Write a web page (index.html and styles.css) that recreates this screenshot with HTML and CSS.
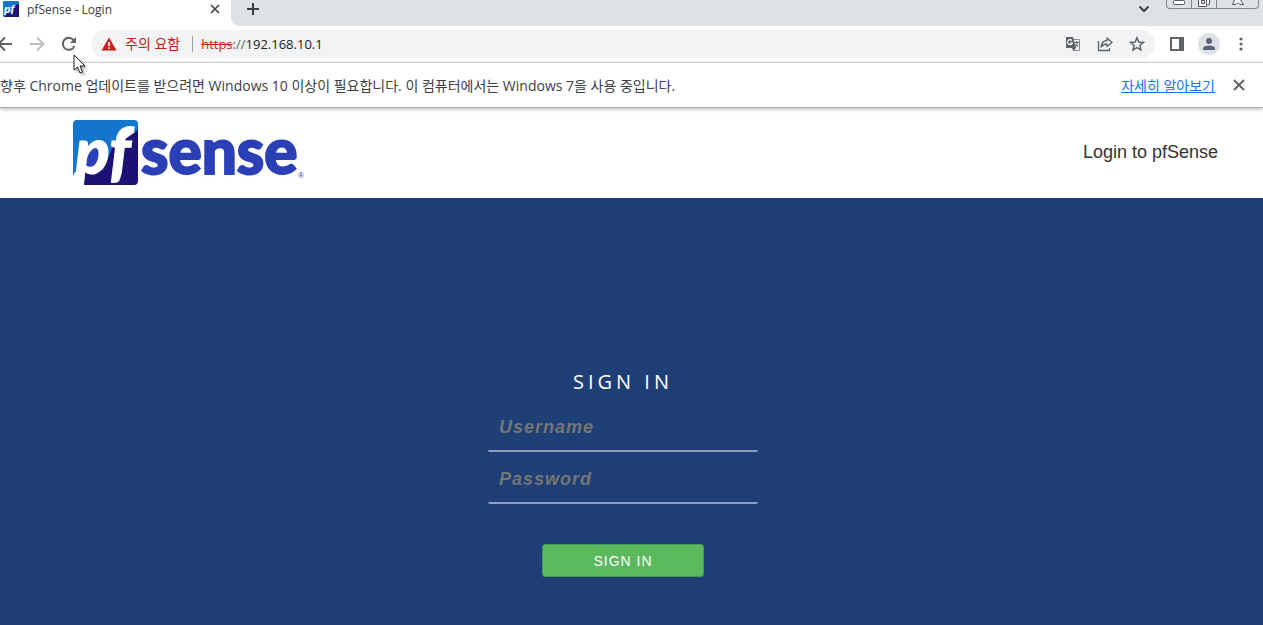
FILE: index.html
```html
<!DOCTYPE html>
<html lang="ko">
<head>
  <meta charset="UTF-8" />
  <meta name="viewport" content="width=device-width, initial-scale=1.0" />
  <title>pfSense - Login</title>
  <link rel="stylesheet" href="styles.css">
</head>
<body>
  <!-- 탭 영역 -->
  <div class="tab-strip">
    <div class="tab">
      <svg class="favicon" width="16" height="16" viewBox="0 0 16 16" aria-hidden="true">
        <rect width="16" height="16" rx="1" fill="#1475cf" />
        <path d="M9 5L16 3V16H2L4 12H8Z" fill="#1c1275" />
        <text x="1" y="12" class="favicon-text">pf</text>
      </svg>
      <span class="tab-title">pfSense - Login</span>
      <button class="icon-button tab-close" aria-label="탭 닫기">
        <svg width="10" height="10" viewBox="0 0 10 10"><path d="M1 1L9 9M9 1L1 9" stroke="#3c4043" stroke-width="1.600" /></svg>
      </button>
    </div>
    <button class="icon-button new-tab" aria-label="새 탭">
      <svg width="12" height="12" viewBox="0 0 12 12"><path d="M6 0V12M0 6H12" stroke="#3c4043" stroke-width="2" /></svg>
    </button>
    <button class="icon-button tab-search" aria-label="탭 검색">
      <svg width="12" height="8" viewBox="0 0 12 8"><path d="M1.500 1.500L6 6L10.500 1.500" fill="none" stroke="#3c4043" stroke-width="2" /></svg>
    </button>
    <div class="window-controls">
      <button aria-label="최소화">
        <svg width="14" height="7" viewBox="0 0 14 7"><rect x="1.500" y="0.500" width="11" height="4" rx="1" fill="#fff" stroke="#55585e" /></svg>
      </button>
      <button aria-label="이전 크기로">
        <svg width="14" height="8" viewBox="0 0 14 8"><path d="M4.500 0V-1H12.500V4.500H10.500" fill="#fff" stroke="#55585e" /><path d="M1.500 -1V6.500H9.500V-1M4.500 0.500H7.500V3.500H4.500Z" fill="#fff" stroke="#55585e" /></svg>
      </button>
      <button class="window-close" aria-label="닫기">
        <svg width="14" height="7" viewBox="0 0 14 7"><path d="M3.500 0L1.500 4.500H5L7 2.500L9 4.500H12.500L9.500 0" fill="#fff" stroke="#55585e" /></svg>
      </button>
    </div>
  </div>

  <!-- 주소창 -->
  <div class="toolbar">
    <button class="icon-button" aria-label="뒤로">
      <svg width="16" height="16" viewBox="0 0 16 16"><path d="M15 8H2M8 1.500L1.500 8L8 14.500" fill="none" stroke="#5f6368" stroke-width="2" /></svg>
    </button>
    <button class="icon-button" aria-label="앞으로">
      <svg width="16" height="16" viewBox="0 0 16 16"><path d="M1 8H14M8 1.500L14.500 8L8 14.500" fill="none" stroke="#babcbe" stroke-width="2" /></svg>
    </button>
    <button class="icon-button" aria-label="새로고침">
      <svg width="16" height="16" viewBox="0 0 16 16"><path d="M13.500 10A6 6 0 1 1 12.500 4" fill="none" stroke="#5f6368" stroke-width="2" /><path d="M15 1V7H9Z" fill="#5f6368" /></svg>
    </button>
    <div class="address-bar">
      <svg width="16" height="14" viewBox="0 0 16 14" aria-hidden="true"><path d="M8 0.500L15.500 13.500H0.500Z" fill="#c5221f" /><path d="M7.200 5H8.800V9H7.200ZM7.200 10.300H8.800V12H7.200Z" fill="#fff" /></svg>
      <span class="warning">주의 요함</span>
      <span class="url"><s>https</s><span class="url-scheme">://</span>192.168.10.1</span>
      <div class="address-actions">
        <button class="icon-button" aria-label="번역">
          <svg width="16" height="16" viewBox="0 0 16 16"><path d="M7 3.500H14.500V14.500H8.500L7 12" fill="#f1f3f4" stroke="#8a8d91" /><path d="M1 1H8L11 12H1Z" fill="#5f6368" /><path d="M7 4.600A2.500 2.500 0 1 0 7.400 7H5" fill="none" stroke="#fff" stroke-width="1.200" /><path d="M9 6.500H14M11.500 5V6.500M13 6.500Q12 9 10 10.500M10.500 8L13 11" fill="none" stroke="#5f6368" /><path d="M7.500 12H11L8.500 15Z" fill="#5f6368" /></svg>
        </button>
        <button class="icon-button" aria-label="공유">
          <svg width="16" height="16" viewBox="0 0 16 16"><path d="M1.500 5V14.500H12.500V12" fill="none" stroke="#5f6368" stroke-width="1.300" /><path d="M10 2L15 6.500L10 10.500V8Q6.500 8 4 11Q4.500 5 10 4.500Z" fill="none" stroke="#5f6368" stroke-width="1.300" stroke-linejoin="round" /></svg>
        </button>
        <button class="icon-button" aria-label="북마크">
          <svg width="16" height="16" viewBox="0 0 16 16"><path d="M8 1.800L9.800 6L14.400 6.400L10.900 9.400L12 13.900L8 11.500L4 13.900L5.100 9.400L1.600 6.400L6.200 6Z" fill="none" stroke="#5f6368" stroke-width="1.500" /></svg>
        </button>
      </div>
    </div>
    <button class="icon-button side-panel" aria-label="측면 패널">
      <svg width="14" height="14" viewBox="0 0 14 14"><path d="M0 0H14V14H0ZM2 2V12H9V2Z" fill="#5f6368" fill-rule="evenodd" /></svg>
    </button>
    <button class="icon-button profile" aria-label="프로필">
      <svg width="12" height="12" viewBox="0 0 12 12"><circle cx="6" cy="3" r="3" fill="#5a6377" /><path d="M0 12V10Q1 7.500 6 7.500Q11 7.500 12 10V12Z" fill="#5a6377" /></svg>
    </button>
    <button class="icon-button" aria-label="메뉴">
      <svg width="4" height="14" viewBox="0 0 4 14"><circle cx="2" cy="2" r="1.600" fill="#5f6368" /><circle cx="2" cy="7" r="1.600" fill="#5f6368" /><circle cx="2" cy="12" r="1.600" fill="#5f6368" /></svg>
    </button>
  </div>

  <!-- 업데이트 안내 -->
  <div class="infobar">
    <span>향후 Chrome 업데이트를 받으려면 Windows 10 이상이 필요합니다. 이 컴퓨터에서는 Windows 7을 사용 중입니다.</span>
    <a href="#">자세히 알아보기</a>
    <button class="icon-button" aria-label="알림 닫기">
      <svg width="12" height="12" viewBox="0 0 12 12"><path d="M1 1L11 11M11 1L1 11" stroke="#5f6368" stroke-width="2" /></svg>
    </button>
  </div>

  <!-- 로그인 페이지 -->
  <header class="page-header">
    <svg class="logo" width="232" height="66" viewBox="0 0 232 66" role="img" aria-label="pfSense">
      <path d="M0 4Q0 0 4 0H61Q65 0 65 4V12H50L40 50L14 52L2 52L0 56Z" fill="#1475cf" />
      <path d="M48 22L65 10V61Q65 65 61 65H6L11 50H30L40 26Z" fill="#1c1275" />
      <ellipse cx="21" cy="37" rx="12" ry="13" fill="#2b3fb7" />
      <text x="2" y="54" class="logo-pf">pf</text>
      <text x="68" y="54" class="logo-sense">sense</text>
      <text x="225" y="58" class="logo-mark">®</text>
    </svg>
    <span class="page-title">Login to pfSense</span>
  </header>
  <main class="login-page">
    <form class="login-form">
      <h1>SIGN IN</h1>
      <input type="text" placeholder="Username" aria-label="Username" />
      <input type="password" placeholder="Password" aria-label="Password" />
      <button type="button" class="sign-in">SIGN IN</button>
    </form>
  </main>

  <!-- 마우스 커서 -->
  <svg class="cursor" width="14" height="21" viewBox="0 0 14 21" aria-hidden="true">
    <path d="M1 1V16L4.500 13L7 19L9.500 18L7 12H12Z" fill="#fff" stroke="#1b1b2b" stroke-linejoin="round" />
  </svg>
</body>
</html>
```

FILE: styles.css
```css
:root {
  --strip: #dee1e6;
  --field: #f1f3f4;
  --icon: #5f6368;
  --danger: #c5221f;
  --link: #1a73e8;
  --navy: #1e3f75;
  --green: #5cb85c;
}
* {
  box-sizing: border-box;
  margin: 0;
  padding: 0;
}
body {
  display: flex;
  flex-direction: column;
  min-height: 100vh;
  font-family: "Open Sans", "Noto Sans CJK KR", sans-serif;
  font-size: 13px;
  color: #3c4043;
  background: #fff;
}
svg {
  display: block;
}
.icon-button {
  display: flex;
  align-items: center;
  justify-content: center;
  flex: none;
  border: none;
  background: none;
  cursor: pointer;
}

/* 탭 */
.tab-strip {
  display: flex;
  height: 26px;
  background: linear-gradient(#fff, #fff) left / 240px 100% no-repeat var(--strip);
}
.tab {
  display: flex;
  align-items: center;
  width: 231px;
  height: 18px;
  padding: 0 11px 0 3px;
  font-size: 12px;
}
.favicon-text {
  font: italic 900 12px Lato, sans-serif;
  fill: #fff;
}
.tab-title {
  margin-left: 8px;
}
.tab-close {
  margin-left: auto;
}
.new-tab {
  width: 44px;
  height: 26px;
  padding-bottom: 8px;
  background: var(--strip);
  border-bottom-left-radius: 8px;
}
.tab-search {
  height: 18px;
  margin-left: auto;
}
.window-controls {
  display: flex;
  width: 93px;
  height: 9px;
  margin: 0 4px 0 16px;
  border: 1px solid #85888e;
  border-top: none;
  border-radius: 0 0 4px 4px;
}
.window-controls button {
  display: flex;
  justify-content: center;
  width: 25px;
  border: none;
  border-right: 1px solid #85888e;
  background: none;
}
.window-controls .window-close {
  flex: 1;
  border-right: none;
}

/* 주소창 */
.toolbar {
  display: flex;
  align-items: center;
  height: 37px;
  padding: 0 20px 0 0;
  border-bottom: 1px solid #dadce0;
}
.toolbar > .icon-button {
  width: 32px;
}
.toolbar > .icon-button:first-child {
  margin-left: -11px;
}
.toolbar > .icon-button:last-child {
  width: 4px;
  margin-left: 19px;
}
.address-bar {
  display: flex;
  align-items: center;
  flex: 1;
  height: 28px;
  margin-left: 6px;
  padding: 0 10px;
  border-radius: 14px;
  background: var(--field);
}
.warning {
  margin-left: 8px;
  padding-right: 12px;
  border-right: 1px solid #9aa0a6;
  font-size: 14px;
  line-height: 16px;
  color: var(--danger);
}
.url {
  margin-left: 8px;
  color: #202124;
}
.url s {
  color: var(--danger);
}
.url-scheme {
  color: var(--icon);
}
.address-actions {
  display: flex;
  gap: 16px;
  margin-left: auto;
}
.toolbar > .side-panel {
  width: 14px;
  margin-left: 15px;
}
.toolbar > .profile {
  width: 22px;
  height: 22px;
  margin-left: 14px;
  border-radius: 50%;
  background: var(--strip);
}

/* 안내 */
.infobar {
  display: flex;
  align-items: center;
  position: relative;
  height: 45px;
  padding-right: 18px;
  border-bottom: 1px solid #a9adac;
  box-shadow: 0 1px 4px rgba(0, 0, 0, 0.3);
  font-size: 14px;
}
.infobar a {
  margin-left: auto;
  margin-right: 18px;
  color: var(--link);
}

/* 페이지 헤더 */
.page-header {
  display: flex;
  align-items: center;
  justify-content: space-between;
  height: 90px;
  padding: 0 45px 0 73px;
}
.logo {
  overflow: visible;
}
.logo-pf {
  font: italic 900 64px Lato, sans-serif;
  fill: #fff;
  stroke: #fff;
  stroke-width: 1px;
}
.logo-sense {
  font: 900 62px Lato, sans-serif;
  fill: #2b3fb7;
  stroke: #2b3fb7;
  stroke-width: 2px;
}
.logo-mark {
  font: 8px "Liberation Sans", sans-serif;
  fill: #2b3fb7;
}
.page-title {
  padding-bottom: 2px;
  font-family: "Liberation Sans", Arial, sans-serif;
  font-size: 18px;
  color: #333;
}

/* 로그인 */
.login-page {
  flex: 1;
  padding: 170px 17px 40px 0;
  background: var(--navy);
}
.login-form {
  display: flex;
  flex-direction: column;
  align-items: center;
  width: 270px;
  margin: 0 auto;
}
.login-form h1 {
  margin-bottom: 8px;
  font-size: 20px;
  font-weight: 400;
  line-height: 28px;
  letter-spacing: 4px;
  color: #fff;
}
.login-form input {
  width: 100%;
  height: 48px;
  margin-bottom: 4px;
  padding: 0 11px;
  border: none;
  border-bottom: 2px solid #8e9fba;
  border-radius: 2px;
  outline: none;
  background: transparent;
  font: italic bold 18px "Liberation Sans", Arial, sans-serif;
  letter-spacing: 1px;
  color: #fff;
}
.login-form input::placeholder {
  color: #757575;
  opacity: 1;
}
.sign-in {
  width: 162px;
  height: 33px;
  margin-top: 36px;
  border: 1px solid #3f9a50;
  border-radius: 3px;
  background: var(--green);
  font: 14px "Liberation Sans", Arial, sans-serif;
  letter-spacing: 1px;
  color: #fff;
  cursor: pointer;
}

.cursor {
  position: absolute;
  left: 73px;
  top: 54px;
  filter: drop-shadow(2px 2px 1px rgba(0, 0, 0, 0.3));
}
```
